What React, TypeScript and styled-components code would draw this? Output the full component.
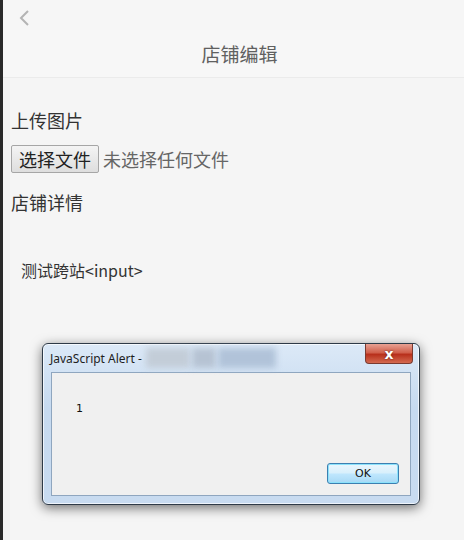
import React from "react";
import styled, { createGlobalStyle } from "styled-components";

const GlobalStyle = createGlobalStyle`
  html, body {
    margin: 0;
    padding: 0;
    background: #f5f5f5;
  }
  body {
    font-family: "Noto Sans CJK SC", "Noto Sans", sans-serif;
  }
`;

const Page = styled.div`
  position: relative;
  width: 464px;
  height: 540px;
  box-sizing: border-box;
  border-left: 3px solid #2a2a2a;
  background: #f5f5f5;
  overflow: hidden;
`;

const TopBar = styled.div`
  height: 30px;
  box-sizing: border-box;
  padding: 6px 0 0 15px;
  display: flex;
  align-items: center;
  background: #f6f6f6;
`;

const Header = styled.div`
  height: 47px;
  display: flex;
  align-items: center;
  justify-content: center;
  background: #f7f7f7;
  border-bottom: 1px solid #ebebeb;
  font-size: 19px;
  color: #606060;
  padding-left: 12px;
`;

const Content = styled.div`
  padding: 30px 8px 0 8px;
  display: flex;
  flex-direction: column;
  align-items: flex-start;
`;

const Label = styled.div`
  font-size: 18px;
  line-height: 24px;
  color: #333;
`;

const FileRow = styled.div`
  display: flex;
  align-items: center;
  gap: 4px;
  margin: 13px 0 17px;
`;

const FileButton = styled.div`
  height: 26px;
  padding: 0 7px;
  display: flex;
  align-items: center;
  border: 1px solid #a6a6a6;
  border-radius: 2px;
  background: linear-gradient(#f4f4f4, #dedede);
  font-size: 18px;
  color: #222;
`;

const FileNone = styled.span`
  font-size: 18px;
  color: #666;
`;

const Detail = styled.div`
  margin: 44px 0 0 10px;
  font-size: 16px;
  color: #333;
`;

const Window = styled.div`
  position: absolute;
  left: 39px;
  top: 343px;
  width: 378px;
  height: 162px;
  box-sizing: border-box;
  border: 1px solid #2e3a47;
  border-radius: 6px;
  background: linear-gradient(#dce9f7, #c6daf0 40%, #c8dbf0);
  box-shadow: 0 3px 12px rgba(0, 0, 0, 0.55), inset 0 0 0 1px rgba(255, 255, 255, 0.7);
  display: flex;
  flex-direction: column;
`;

const TitleBar = styled.div`
  position: relative;
  height: 28px;
  display: flex;
  align-items: center;
  padding-left: 7px;
  font-family: "Noto Sans", "DejaVu Sans", sans-serif;
  font-size: 12px;
  color: #1e1e1e;
`;

const Blur = styled.span<{ w: number; c: string; dx: number }>`
  display: inline-block;
  width: ${(p) => p.w}px;
  height: 20px;
  margin-left: ${(p) => p.dx}px;
  background: ${(p) => p.c};
  filter: blur(3px);
`;

const CloseButton = styled.div`
  position: absolute;
  top: 0;
  right: 6px;
  width: 46px;
  height: 19px;
  border: 1px solid #7a3a30;
  border-top: none;
  border-radius: 0 0 4px 4px;
  background: linear-gradient(#e8a193, #d0604c 45%, #b8301c 55%, #d46a50);
  display: flex;
  align-items: center;
  justify-content: center;
  color: #fff;
  font-family: "DejaVu Sans", sans-serif;
  font-weight: bold;
  font-size: 14px;
  line-height: 1;
  text-shadow: 0 0 2px #5a1a10;
`;

const Client = styled.div`
  flex: 1;
  margin: 0 8px 8px 8px;
  border: 1px solid #8fa6bf;
  background: #f0f0f0;
  display: flex;
  flex-direction: column;
  justify-content: space-between;
  padding: 29px 11px 11px 24px;
  font-family: "DejaVu Sans", sans-serif;
  font-size: 11px;
  color: #111;
`;

const OkRow = styled.div`
  display: flex;
  justify-content: flex-end;
`;

const OkButton = styled.div`
  width: 70px;
  height: 19px;
  border: 1px solid #3c7fb1;
  border-radius: 3px;
  background: linear-gradient(#eaf6fd, #d9f0fc 45%, #bee6fd 55%, #a7d9f5);
  box-shadow: inset 0 0 0 1px #8ce2fb;
  display: flex;
  align-items: center;
  justify-content: center;
  font-size: 11px;
  color: #111;
`;

function Chevron() {
  return (
    <svg width="12" height="18" viewBox="0 0 12 18">
      <path d="M10 2 L3 9 L10 16" fill="none" stroke="#b4b4b4" strokeWidth="2" />
    </svg>
  );
}

export default function App() {
  return (
    <Page>
      <GlobalStyle />
      <TopBar>
        <Chevron />
      </TopBar>
      <Header>店铺编辑</Header>
      <Content>
        <Label>上传图片</Label>
        <FileRow>
          <FileButton>选择文件</FileButton>
          <FileNone>未选择任何文件</FileNone>
        </FileRow>
        <Label>店铺详情</Label>
        <Detail>测试跨站&lt;input&gt;</Detail>
      </Content>
      <Window>
        <TitleBar>
          JavaScript Alert -
          <Blur w={44} c="#c3cdd8" dx={4} />
          <Blur w={24} c="#b6c3d3" dx={2} />
          <Blur w={58} c="#b1c3d9" dx={2} />
          <CloseButton>x</CloseButton>
        </TitleBar>
        <Client>
          <span>1</span>
          <OkRow>
            <OkButton>OK</OkButton>
          </OkRow>
        </Client>
      </Window>
    </Page>
  );
}
